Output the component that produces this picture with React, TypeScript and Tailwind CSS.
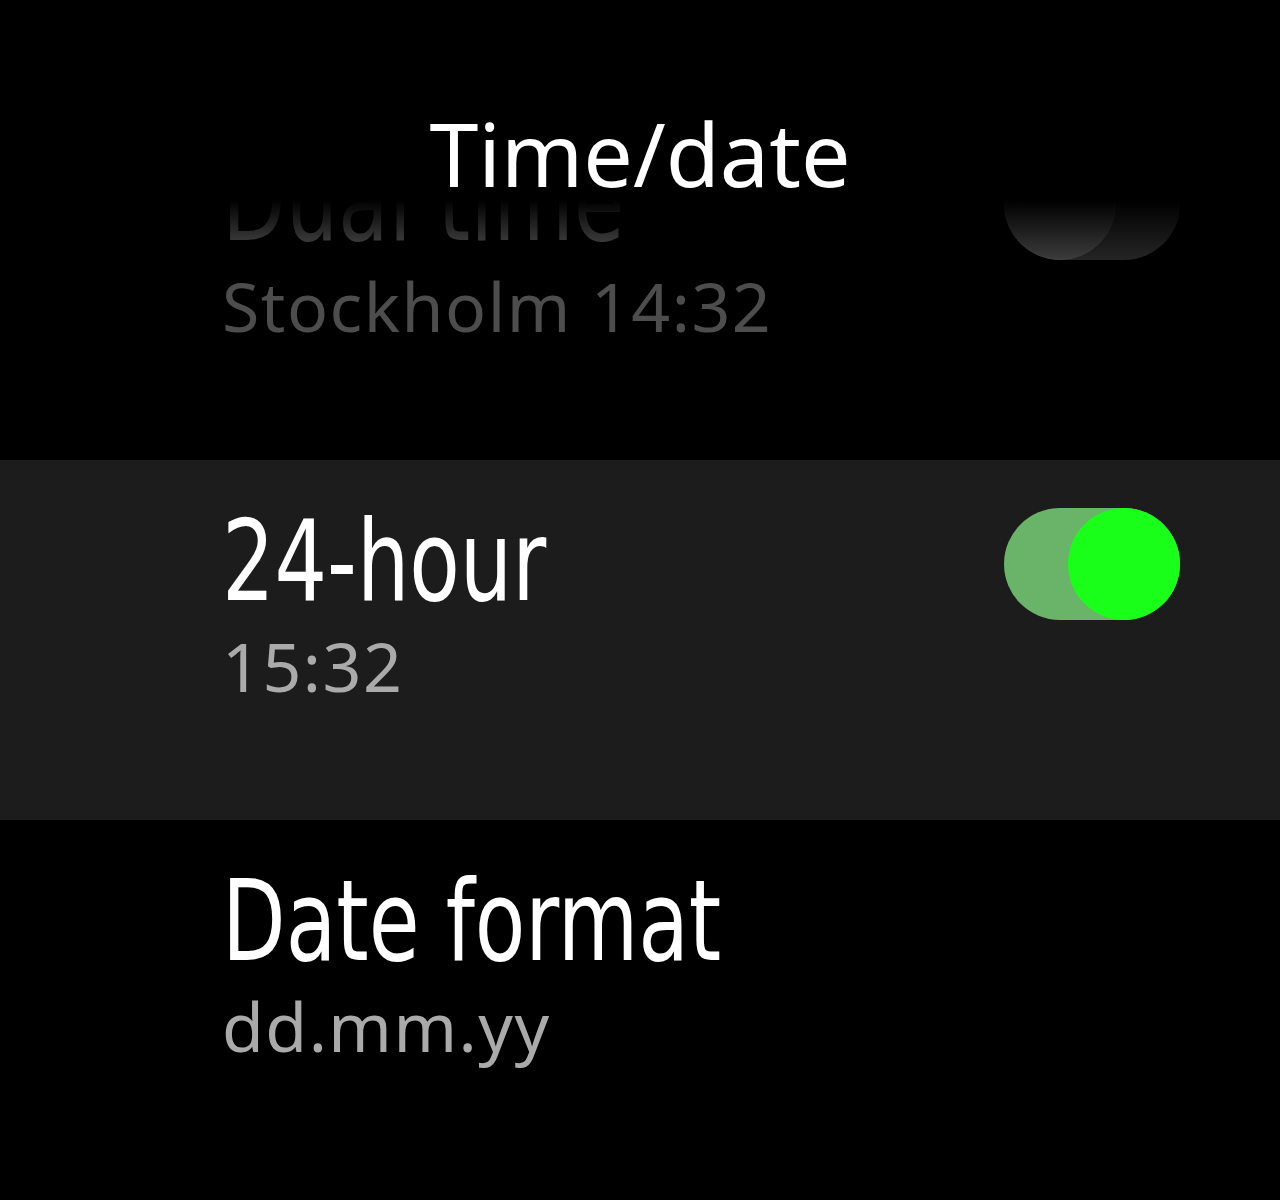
const titleFont = { fontFamily: '"DejaVu Sans Condensed", "Liberation Sans Narrow", sans-serif' };
const bodyFont = { fontFamily: '"Noto Sans", "Open Sans", sans-serif' };

type Row = {
    title: string;
    value: string;
    toggle?: 'on' | 'off';
    active?: boolean;
    dim?: boolean;
};

const rows: Row[] = [
    { title: 'Dual time', value: 'Stockholm 14:32', toggle: 'off', dim: true },
    { title: '24-hour', value: '15:32', toggle: 'on', active: true },
    { title: 'Date format', value: 'dd.mm.yy' },
];

function Toggle({ on, dim }: { on: boolean; dim?: boolean }) {
    if (on) {
        return (
            <div className="w-[176px] h-[112px] rounded-full bg-[#6ab46a] flex justify-end">
                <div className="w-[112px] h-[112px] rounded-full bg-[#1aff1a]" />
            </div>
        );
    }
    return (
        <div className={`w-[176px] h-[112px] rounded-full flex justify-start ${dim ? 'bg-[#262626]' : 'bg-[#555]'}`}>
            <div className={`w-[112px] h-[112px] rounded-full border ${dim ? 'bg-[#3d3d3d] border-[#444]' : 'bg-[#888] border-[#999]'}`} />
        </div>
    );
}

export default function App() {
    return (
        <div className="relative w-[1280px] h-[1200px] bg-black overflow-hidden">
            {/* Header */}
            <div className="absolute top-0 left-0 right-0 h-[200px] bg-black z-20 flex justify-center">
                <h1 className="pt-[109px] text-[88px] leading-[88px] text-white" style={bodyFont}>
                    Time/date
                </h1>
            </div>
            {/* fade under header */}
            <div className="absolute top-[200px] left-0 right-0 h-[62px] bg-gradient-to-b from-black to-transparent z-10" />

            {/* List */}
            <div className="pt-[100px] flex flex-col">
                {rows.map((row) => (
                    <div
                        key={row.title}
                        className={`h-[360px] flex justify-between pl-[222px] pr-[100px] ${row.active ? 'bg-[#1c1c1c]' : ''}`}
                    >
                        <div className="flex flex-col items-start">
                            <div
                                className={`pt-[45px] inline-block origin-left scale-x-[0.82] text-[112px] leading-[112px] ${row.dim ? 'text-[#555]' : 'text-white'}`}
                                style={titleFont}
                            >
                                {row.title}
                            </div>
                            <div
                                className={`mt-[15px] text-[68px] leading-[68px] tracking-[1.5px] ${row.dim ? 'text-[#4d4d4d]' : 'text-[#aaaaaa]'}`}
                                style={bodyFont}
                            >
                                {row.value}
                            </div>
                        </div>
                        {row.toggle && (
                            <div className="pt-[48px]">
                                <Toggle on={row.toggle === 'on'} dim={row.dim} />
                            </div>
                        )}
                    </div>
                ))}
            </div>
        </div>
    );
}
